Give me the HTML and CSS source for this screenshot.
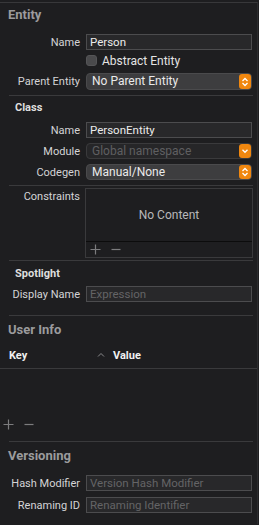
FILE: index.html
```html
<!DOCTYPE html>
<html lang="en">

<head>
    <meta charset="UTF-8">
    <meta name="viewport" content="width=device-width, initial-scale=1.0">
    <title>Entity Inspector</title>
    <link rel="stylesheet" href="styles.css">
</head>

<body>
    <div class="panel">
        <div class="title">Entity</div>
        <div class="row row-name">
            <label class="label">Name</label>
            <div class="field">Person</div>
        </div>
        <div class="row row-check">
            <span class="label"></span>
            <span class="checkbox"></span>
            <span class="check-text">Abstract Entity</span>
        </div>
        <div class="row row-parent">
            <label class="label">Parent Entity</label>
            <div class="popup">No Parent Entity<span class="stepper">
                <svg width="8" height="10" viewBox="0 0 8 10"><path d="M1.5 4 L4 1.5 L6.5 4 M1.5 6 L4 8.5 L6.5 6" fill="none" stroke="#fff" stroke-width="1.3"/></svg>
            </span></div>
        </div>
        <div class="sep sep-1"></div>

        <div class="subtitle sub-class">Class</div>
        <div class="row row-cname">
            <label class="label">Name</label>
            <div class="field">PersonEntity</div>
        </div>
        <div class="row row-module">
            <label class="label">Module</label>
            <div class="popup disabled">Global namespace<span class="stepper">
                <svg width="8" height="10" viewBox="0 0 8 10"><path d="M1.5 3.8 L4 6.3 L6.5 3.8" fill="none" stroke="#fff" stroke-width="1.3"/></svg>
            </span></div>
        </div>
        <div class="row row-codegen">
            <label class="label">Codegen</label>
            <div class="popup">Manual/None<span class="stepper">
                <svg width="8" height="10" viewBox="0 0 8 10"><path d="M1.5 4 L4 1.5 L6.5 4 M1.5 6 L4 8.5 L6.5 6" fill="none" stroke="#fff" stroke-width="1.3"/></svg>
            </span></div>
        </div>
        <div class="sep sep-2"></div>

        <div class="row row-constraints">
            <label class="label top">Constraints</label>
            <div class="list-box">
                <div class="list-empty">No Content</div>
                <div class="list-tools">
                    <svg class="plus" width="11" height="11" viewBox="0 0 11 11"><path d="M5.5 0.5 V10.5 M0.5 5.5 H10.5" stroke="#7c7c7e" stroke-width="1.2"/></svg>
                    <svg class="minus" width="10" height="11" viewBox="0 0 10 11"><path d="M0.5 5.5 H9.5" stroke="#7c7c7e" stroke-width="1.2"/></svg>
                </div>
            </div>
        </div>
        <div class="sep sep-3"></div>

        <div class="subtitle sub-spot">Spotlight</div>
        <div class="row row-display">
            <label class="label">Display Name</label>
            <div class="field placeholder">Expression</div>
        </div>
        <div class="sep sep-4"></div>

        <div class="title title-user">User Info</div>
        <div class="table-head">
            <span class="col-key">Key</span>
            <span class="sort">
                <svg width="8" height="6" viewBox="0 0 8 6"><path d="M1 4.5 L4 1.5 L7 4.5" fill="none" stroke="#8a8a8c" stroke-width="1"/></svg>
            </span>
            <span class="col-value">Value</span>
        </div>
        <div class="table-body"></div>
        <div class="table-tools">
            <svg class="plus" width="11" height="11" viewBox="0 0 11 11"><path d="M5.5 0.5 V10.5 M0.5 5.5 H10.5" stroke="#7c7c7e" stroke-width="1.2"/></svg>
            <svg class="minus" width="10" height="11" viewBox="0 0 10 11"><path d="M0.5 5.5 H9.5" stroke="#7c7c7e" stroke-width="1.2"/></svg>
        </div>
        <div class="sep sep-5"></div>

        <div class="title title-version">Versioning</div>
        <div class="row row-hash">
            <label class="label">Hash Modifier</label>
            <div class="field placeholder">Version Hash Modifier</div>
        </div>
        <div class="row row-rename">
            <label class="label">Renaming ID</label>
            <div class="field placeholder">Renaming Identifier</div>
        </div>
    </div>
</body>

</html>
```
FILE: styles.css
```css
body {
    margin: 0;
    padding: 0;
    background-color: #1e1e20;
    font-family: 'Roboto', 'Liberation Sans', sans-serif;
    font-size: 11px;
    color: #dcdcdc;
}

.panel {
    width: 258px;
    height: 522px;
    border-right: 1px solid #2c2c2e;
    border-top: 1px solid #38383a;
    box-sizing: border-box;
    overflow: hidden;
    margin-top: 2px;
}

.title {
    font-size: 13px;
    font-weight: bold;
    color: #9b9b9d;
    padding-left: 8px;
    height: 25px;
    line-height: 23px;
}

.subtitle {
    font-weight: bold;
    color: #dedede;
    padding-left: 15px;
}

.row {
    display: flex;
    align-items: center;
    padding-right: 5px;
}

.label {
    width: 80px;
    flex: none;
    text-align: right;
    margin-right: 6px;
    color: #d4d4d6;
    white-space: nowrap;
}

.label.top {
    align-self: flex-start;
    margin-top: 2px;
    line-height: 14px;
}

.field {
    flex: 1;
    height: 16px;
    box-sizing: border-box;
    border: 1px solid #4c4c4e;
    background-color: #28282a;
    color: #ececec;
    padding-left: 3px;
    font-size: 11.5px;
    line-height: 14px;
    white-space: nowrap;
    overflow: hidden;
}

.field.placeholder {
    color: #646466;
}

.popup {
    flex: 1;
    position: relative;
    height: 16px;
    box-sizing: border-box;
    border-radius: 4px;
    background-color: #3d3d3f;
    border: 1px solid #4a4a4c;
    color: #eaeaea;
    padding-left: 5px;
    font-size: 12px;
    line-height: 14px;
}

.popup.disabled {
    background-color: #262628;
    border-color: #3a3a3c;
    color: #5f5f61;
}

.stepper {
    position: absolute;
    right: 0;
    top: 0;
    width: 12px;
    height: 14px;
    border-radius: 3px;
    background-color: #f0870f;
    display: flex;
    align-items: center;
    justify-content: center;
}

.checkbox {
    width: 11px;
    height: 11px;
    border-radius: 3px;
    background-color: #4a4a4c;
    border: 1px solid #555557;
    box-sizing: border-box;
    margin-right: 5px;
}

.check-text {
    color: #e4e4e4;
    font-size: 12px;
}

.sep {
    height: 1px;
    background-color: #3a3a3c;
    margin-left: 9px;
    margin-right: 4px;
}

.row-name { margin-top: 6px; }
.row-check { margin-top: 3px; height: 15px; }
.row-parent { margin-top: 5px; }
.row-parent .popup { height: 17px; line-height: 15px; }
.row-parent .stepper { height: 15px; }
.sep-1 { margin-top: 5px; }

.sub-class { height: 22px; line-height: 24px; }
.row-cname { margin-top: 4px; }
.row-module { margin-top: 5px; }
.row-codegen { margin-top: 5px; }
.sep-2 { margin-top: 5px; }

.row-constraints { margin-top: 2px; align-items: flex-start; padding-right: 4px; }

.list-box {
    flex: 1;
    height: 70px;
    margin-left: -1px;
    border: 1px solid #3a3a3c;
    box-sizing: border-box;
    display: flex;
    flex-direction: column;
}

.list-empty {
    flex: 1;
    display: flex;
    align-items: center;
    justify-content: center;
    color: #b8b8ba;
    font-size: 12px;
    border-bottom: 1px solid #0c0c0c;
}

.list-tools,
.table-tools {
    display: flex;
    align-items: center;
    height: 15px;
}

.list-tools { padding-left: 4px; }

.minus {
    margin-left: 10px;
}

.sep-3 { margin-top: 2px; }

.sub-spot { height: 24px; line-height: 25px; }
.row-display { margin-top: 1px; }
.sep-4 { margin-top: 13px; }

.title-user { height: 26px; line-height: 27px; }

.table-head {
    display: flex;
    align-items: center;
    height: 26px;
    border-bottom: 1px solid #3a3a3c;
    margin-right: -1px;
    font-weight: bold;
    color: #f0f0f0;
}

.col-key {
    width: 88px;
    padding-left: 9px;
}

.sort {
    width: 16px;
    display: flex;
    align-items: center;
}

.table-body { height: 45px; }

.table-tools {
    height: 21px;
    padding-left: 3px;
}

.sep-5 { margin-top: 6px; }

.title-version { height: 26px; line-height: 27px; }
.row-hash { margin-top: 7px; }
.row-rename { margin-top: 6px; }
```
